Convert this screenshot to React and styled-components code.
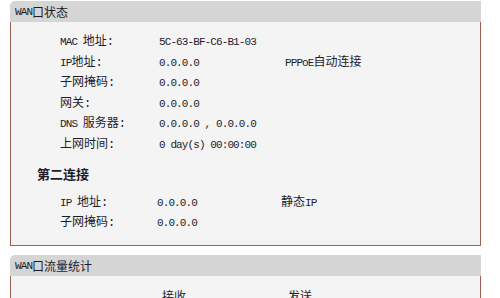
import React from 'react'
import styled, { createGlobalStyle } from 'styled-components'

const GlobalStyle = createGlobalStyle`
    html, body {
        margin: 0;
        padding: 0;
        background: #ffffff;
    }
    body {
        font-family: "Liberation Mono", "Noto Sans CJK SC", monospace;
        color: #1c1c2c;
        overflow: hidden;
    }
`;

const Page = styled.div`
    width: 500px;
    height: 298px;
    padding-top: 1px;
    box-sizing: border-box;
    overflow: hidden;
`;

const Panel = styled.section`
    margin-left: 10px;
    width: 471px;
    margin-bottom: ${p => p.$gap || 0}px;
`;

const Header = styled.div`
    height: 21px;
    background: #d5d5d5;
    border-top-left-radius: 5px;
    display: flex;
    align-items: center;
    padding-left: 5px;
    font-size: 12px;
    color: #1c1c2c;
`;

const Body = styled.div`
    background: #f4f4f4;
    border: 1px solid #9e5f55;
    border-top: none;
    height: ${p => p.$height}px;
    box-sizing: border-box;
    padding-top: ${p => p.$top || 0}px;
`;

const Rows = styled.div`
    display: grid;
    grid-template-columns: ${p => p.$cols};
    padding-left: ${p => p.$left}px;
`;

const Cell = styled.div`
    height: 20.6px;
    line-height: 20.6px;
    font-size: 12px;
    white-space: nowrap;
`;

const Lat = styled.span`
    font-family: "Liberation Mono", monospace;
    font-size: 11px;
    letter-spacing: -0.9px;
`;

const SubTitle = styled.div`
    height: 22px;
    line-height: 22px;
    margin: 7px 0 8px 26px;
    font-family: "Noto Sans CJK SC", sans-serif;
    font-weight: 700;
    font-size: 13px;
`;

const StatHead = styled.div`
    display: grid;
    grid-template-columns: 126px 126px;
    padding-left: 151px;
    font-size: 12px;
    line-height: 20px;
    padding-top: 12px;
`;

const first = [
    [<><Lat>MAC </Lat>地址:</>, '5C-63-BF-C6-B1-03', ''],
    [<><Lat>IP</Lat>地址:</>, '0.0.0.0', <><Lat>PPPoE</Lat>自动连接</>],
    ['子网掩码:', '0.0.0.0', ''],
    ['网关:', '0.0.0.0', ''],
    [<><Lat>DNS </Lat>服务器:</>, '0.0.0.0 , 0.0.0.0', ''],
    ['上网时间:', '0 day(s) 00:00:00', ''],
]

const second = [
    [<><Lat>IP </Lat>地址:</>, '0.0.0.0', <>静态<Lat>IP</Lat></>],
    ['子网掩码:', '0.0.0.0', ''],
]

const Table = ({ rows, cols, left }) => (
    <Rows $cols={cols} $left={left}>
        {rows.map((r, i) => (
            <React.Fragment key={i}>
                <Cell>{r[0]}</Cell>
                <Cell><Lat>{r[1]}</Lat></Cell>
                <Cell>{r[2]}</Cell>
            </React.Fragment>
        ))}
    </Rows>
)

const App = () => {
    return (
        <>
            <GlobalStyle />
            <Page>
                <Panel $gap={9}>
                    <Header><Lat>WAN</Lat>口状态</Header>
                    <Body $height={224} $top={10}>
                        <Table rows={first} cols="99px 126px 1fr" left={49} />
                        <SubTitle>第二连接</SubTitle>
                        <Table rows={second} cols="97px 124px 1fr" left={49} />
                    </Body>
                </Panel>
                <Panel>
                    <Header><Lat>WAN</Lat>口流量统计</Header>
                    <Body $height={60}>
                        <StatHead>
                            <span>接收</span>
                            <span>发送</span>
                        </StatHead>
                    </Body>
                </Panel>
            </Page>
        </>
    )
}

export default App
